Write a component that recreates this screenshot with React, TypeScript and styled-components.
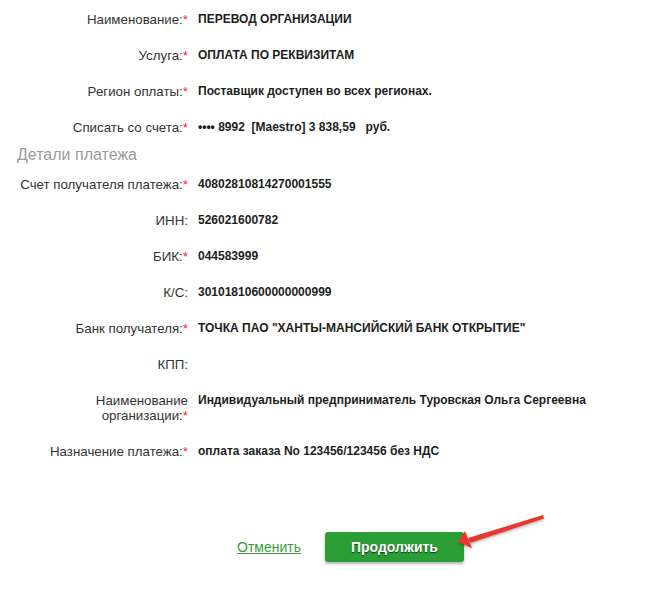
import React from "react";
import styled, { createGlobalStyle } from "styled-components";

const Global = createGlobalStyle`
  html, body { margin: 0; padding: 0; background: #fff; }
  body { font-family: "Liberation Sans", Arial, sans-serif; }
`;

const Page = styled.div`
  position: relative;
  width: 661px;
  height: 590px;
  overflow: hidden;
  padding-top: 2px;
  box-sizing: border-box;
`;

const Form = styled.div`
  display: flex;
  flex-direction: column;
`;

const Row = styled.div`
  display: grid;
  grid-template-columns: 188px 1fr;
  column-gap: 10px;
  padding: 10px 0 11px;
  line-height: 15px;
`;

const Label = styled.div`
  text-align: right;
  font-size: 13.3px;
  color: #333;
`;

const Req = styled.span`
  color: #f0282d;
`;

const Value = styled.div`
  font-size: 12px;
  font-weight: bold;
  color: #1e1e1e;
  white-space: pre;
`;

const Heading = styled.div`
  padding-left: 17px;
  font-size: 16px;
  line-height: 18px;
  color: #9a9a9a;
  margin-bottom: 3px;
`;

const Actions = styled.div`
  display: flex;
  align-items: center;
  padding-left: 237px;
  gap: 24px;
  margin-top: 62px;
`;

const CancelLink = styled.a`
  font-size: 14px;
  color: #3d9a3d;
  text-decoration: underline;
  cursor: pointer;
`;

const PrimaryButton = styled.button`
  width: 139px;
  height: 30px;
  border: none;
  border-radius: 3px;
  background: #2a9d34;
  color: #fff;
  font-family: "Liberation Sans", Arial, sans-serif;
  font-size: 14px;
  font-weight: bold;
  text-shadow: 0 1px 1px rgba(0, 0, 0, 0.65);
  box-shadow: 0 2px 3px rgba(0, 0, 0, 0.3);
  cursor: pointer;
`;

const Arrow = styled.svg`
  position: absolute;
  left: 0;
  top: 0;
  pointer-events: none;
`;

type Field = { label: React.ReactNode; req?: boolean; value: string };

const top: Field[] = [
  { label: "Наименование:", req: true, value: "ПЕРЕВОД ОРГАНИЗАЦИИ" },
  { label: "Услуга:", req: true, value: "ОПЛАТА ПО РЕКВИЗИТАМ" },
  { label: "Регион оплаты:", req: true, value: "Поставщик доступен во всех регионах." },
  { label: "Списать со счета:", req: true, value: "•••• 8992  [Maestro] 3 838,59   руб." },
];

const details: Field[] = [
  { label: "Счет получателя платежа:", req: true, value: "40802810814270001555" },
  { label: "ИНН:", value: "526021600782" },
  { label: "БИК:", req: true, value: "044583999" },
  { label: "К/С:", value: "30101810600000000999" },
  { label: "Банк получателя:", req: true, value: "ТОЧКА ПАО \"ХАНТЫ-МАНСИЙСКИЙ БАНК ОТКРЫТИЕ\"" },
  { label: "КПП:", value: "" },
  {
    label: (
      <>
        Наименование
        <br />
        организации:
      </>
    ),
    req: true,
    value: "Индивидуальный предприниматель Туровская Ольга Сергеевна",
  },
  { label: "Назначение платежа:", req: true, value: "оплата заказа No 123456/123456 без НДС" },
];

const FieldRow = ({ f }: { f: Field }) => (
  <Row>
    <Label>
      {f.label}
      {f.req && <Req>*</Req>}
    </Label>
    <Value>{f.value}</Value>
  </Row>
);

export default function App() {
  return (
    <>
      <Global />
      <Page>
        <Form>
          {top.map((f, i) => (
            <FieldRow key={i} f={f} />
          ))}
          <Heading>Детали платежа</Heading>
          {details.map((f, i) => (
            <FieldRow key={i} f={f} />
          ))}
          <Actions>
            <CancelLink>Отменить</CancelLink>
            <PrimaryButton>Продолжить</PrimaryButton>
          </Actions>
        </Form>
        <Arrow width="661" height="590" viewBox="0 0 661 590">
          <defs>
            <filter id="sh" x="-10%" y="-10%" width="120%" height="130%">
              <feDropShadow dx="0" dy="1.5" stdDeviation="1" floodColor="#000" floodOpacity="0.3" />
            </filter>
          </defs>
          <g filter="url(#sh)" fill="#e5392f">
            <polygon points="543,515 544,518.5 470,543 468,538" />
            <polygon points="458,542 465,531 472,548" />
          </g>
        </Arrow>
      </Page>
    </>
  );
}
